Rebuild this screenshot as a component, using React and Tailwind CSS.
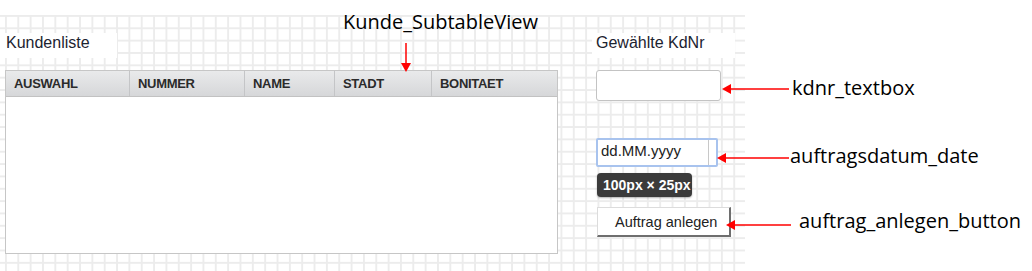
import React from 'react';

const columns = [
  { label: 'AUSWAHL', width: 'w-[123px]' },
  { label: 'NUMMER', width: 'w-[115px]' },
  { label: 'NAME', width: 'w-[90px]' },
  { label: 'STADT', width: 'w-[97px]' },
  { label: 'BONITAET', width: 'flex-1' },
];

const Note = ({ className, children }) => (
  <div className={`absolute font-['Open_Sans',sans-serif] text-[20px] leading-[28px] text-black whitespace-nowrap ${className}`}>
    {children}
  </div>
);

// red pointer lines from the notes to the widgets
const Arrows = () => (
  <svg className="absolute left-0 top-0 pointer-events-none" width="1032" height="271">
    <g stroke="#ff0000" strokeWidth="1.5" fill="none">
      <line x1="406" y1="43" x2="406" y2="64" />
      <line x1="789" y1="89" x2="730" y2="89" />
      <line x1="789" y1="158" x2="725" y2="158" />
      <line x1="791" y1="225" x2="734" y2="225" />
    </g>
    <g fill="#ff0000">
      <polygon points="401,63 411,63 406,72" />
      <polygon points="731,84 731,94 722,89" />
      <polygon points="726,153 726,163 717,158" />
      <polygon points="735,220 735,230 726,225" />
    </g>
  </svg>
);

const App = () => {
  return (
    <div className="relative w-[1032px] h-[271px] bg-white overflow-hidden font-['Liberation_Sans',Arial,sans-serif]">
      <div className="mt-[15px] w-[745px] h-[256px] flex items-start bg-white bg-[linear-gradient(to_right,#ececec_2px,transparent_2px),linear-gradient(to_bottom,#ececec_2px,transparent_2px)] bg-[size:12.35px_12.35px] bg-[position:5px_0px]">
        {/* Kundenliste */}
        <div className="pt-[18px]">
          <div className="w-[117px] h-[25px] bg-white pl-[6px] text-[16px] leading-[19px] text-[#1c2330]">Kundenliste</div>
          <div className="mt-[12px] ml-[5px] w-[553px] h-[184px] bg-white border border-[#c6c6c6] flex flex-col">
            <div className="flex h-[26px] border-b border-[#c2c2c2] bg-[linear-gradient(to_bottom,#e9eaeb,#d6d7d9)]">
              {columns.map((col, i) => (
                <div
                  key={col.label}
                  className={`${col.width} pl-[8px] text-[13px] leading-[25px] font-bold text-[#2b2b2b] tracking-[-0.3px] ${i > 0 ? 'border-l border-[#c4c5c7]' : ''}`}
                >
                  {col.label}
                </div>
              ))}
            </div>
          </div>
        </div>

        {/* Auftragsformular */}
        <div className="ml-[34px] pt-[18px] flex flex-col items-start">
          <div className="w-[143px] h-[25px] bg-white pl-[4px] text-[16px] leading-[19px] text-[#1c2330]">Gewählte KdNr</div>
          <div className="mt-[12px] ml-[4px] w-[125px] h-[31px] bg-white border border-[#c3c3c3] rounded-[3px]" />
          <div className="mt-[37px] ml-[4px] w-[122px] h-[29px] border-2 border-[#a8c3ee] rounded-[2px] bg-white flex">
            <div className="w-[111px] h-full border-r border-[#c8c8c8] pl-[3px] text-[15px] leading-[21px] text-[#222]">dd.MM.yyyy</div>
          </div>
          <div className="mt-[6px] ml-[5px] w-[95px] h-[24px] rounded-[4px] bg-[#3b3b3b] pl-[6px] text-[14px] leading-[24px] font-bold text-white shadow-[0_1px_2px_rgba(0,0,0,0.3)]">
            100px × 25px
          </div>
          <button className="mt-[10px] ml-[5px] w-[134px] h-[30px] bg-white border border-[#dcdcdc] border-r-2 border-b-2 border-r-[#6e6e6e] border-b-[#6e6e6e] pl-[17px] text-left text-[14.5px] leading-[20px] text-[#222]">
            Auftrag anlegen
          </button>
        </div>
      </div>

      <Note className="left-[343px] top-[8px]">Kunde_SubtableView</Note>
      <Note className="left-[792px] top-[74px]">kdnr_textbox</Note>
      <Note className="left-[790px] top-[142px]">auftragsdatum_date</Note>
      <Note className="left-[799px] top-[207px]">auftrag_anlegen_button</Note>
      <Arrows />
    </div>
  );
};

export default App;
